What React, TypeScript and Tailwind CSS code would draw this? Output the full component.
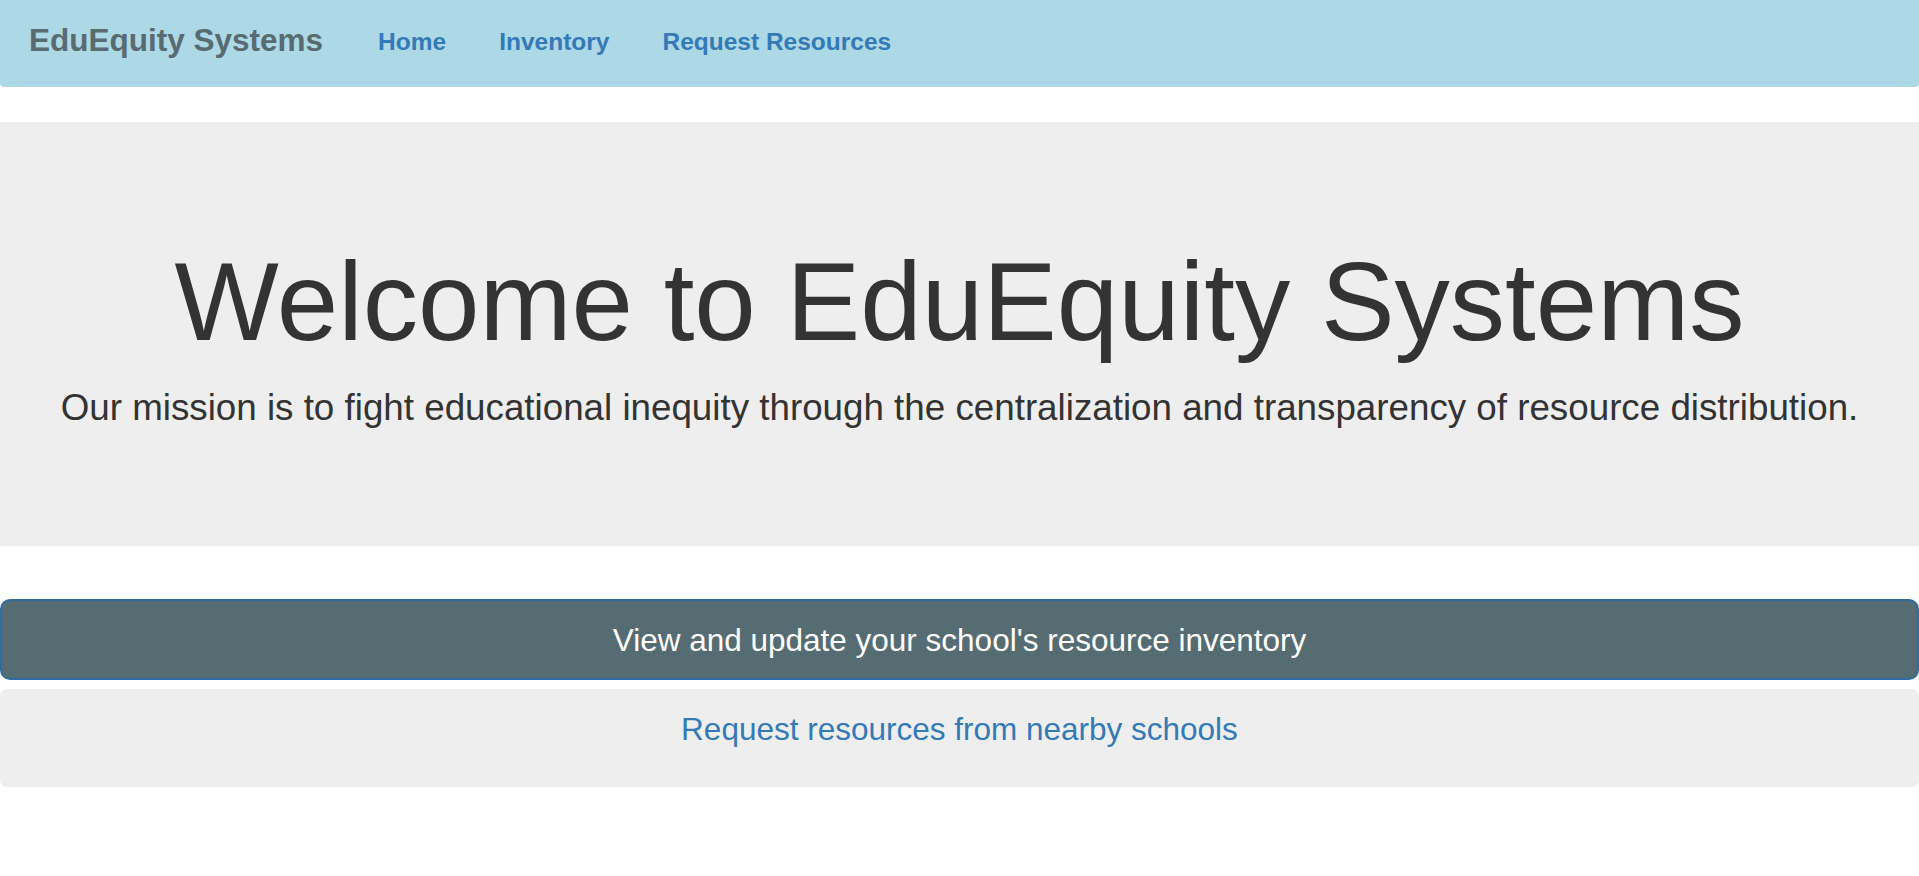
export default function App() {
  return (
    <div className="min-h-screen bg-white font-['Liberation_Sans',Arial,sans-serif] text-[#333]">
      {/* Top navbar */}
      <nav className="h-[87px] bg-[#add8e6] rounded-b-[4px] flex items-start">
        <a className="pl-[29px] pt-[25px] text-[31.5px] leading-none font-bold text-[#586b70]">
          EduEquity Systems
        </a>
        <ul className="ml-[55px] flex gap-[53px] pt-[30px]">
          <li>
            <a className="text-[24.5px] leading-none font-bold text-[#337ab7]">Home</a>
          </li>
          <li>
            <a className="text-[24.5px] leading-none font-bold text-[#337ab7]">Inventory</a>
          </li>
          <li>
            <a className="text-[24.5px] leading-none font-bold text-[#337ab7]">Request Resources</a>
          </li>
        </ul>
      </nav>

      {/* Jumbotron */}
      <section className="mt-[35px] bg-[#eee] pt-[84px] pb-[84px] text-center">
        <h1 className="mt-[35px] mb-[19px] text-[110.5px] leading-[1.1] font-normal text-[#333]">
          Welcome to EduEquity Systems
        </h1>
        <p className="mb-[28px] text-[36.75px] leading-[52.5px] text-[#333]">
          Our mission is to fight educational inequity through the centralization and transparency of
          resource distribution.
        </p>
      </section>

      {/* Actions */}
      <div className="mt-[53px] flex flex-col gap-[9px]">
        <button className="w-full h-[81px] rounded-[10px] border-[2px] border-[#2e6da4] bg-[#556c72] text-[31.5px] leading-[42px] text-white">
          View and update your school's resource inventory
        </button>
        <div className="w-full rounded-[7px] bg-[#eee] pt-[19px] pb-[37px] text-center">
          <a className="text-[31.5px] leading-[42px] text-[#337ab7]">Request resources from nearby schools</a>
        </div>
      </div>
    </div>
  )
}
